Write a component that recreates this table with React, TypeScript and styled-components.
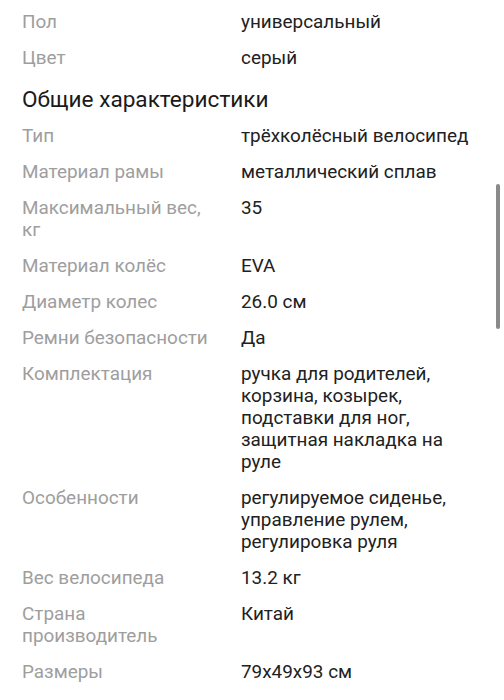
import React from 'react';
import styled, { createGlobalStyle } from 'styled-components';

const GlobalStyle = createGlobalStyle`
  body {
    margin: 0;
    background: #ffffff;
    font-family: Roboto, "Noto Sans", sans-serif;
  }
`;

const Page = styled.div`
  position: relative;
  width: 504px;
  height: 700px;
  overflow: hidden;
  background: #ffffff;
  padding-top: 4px;
  box-sizing: border-box;
`;

const SpecList = styled.dl`
  margin: 0;
  padding: 0 26px 0 22px;
  display: grid;
  grid-template-columns: 193px 1fr;
  column-gap: 26px;
`;

const Label = styled.dt`
  padding: 7px 0;
  font-size: 18.9px;
  line-height: 22px;
  color: #9e9e9e;
`;

const Value = styled.dd`
  margin: 0;
  padding: 7px 0;
  font-size: 18.9px;
  line-height: 22px;
  color: #212121;
`;

const SectionTitle = styled.h3`
  margin: 0;
  padding: 10px 22px 4px;
  font-size: 22.6px;
  font-weight: 400;
  line-height: 28px;
  color: #1a1a1a;
`;

const Scrollbar = styled.div`
  position: absolute;
  top: 184px;
  right: 4px;
  width: 4px;
  height: 145px;
  border-radius: 2px;
  background: #8a8a8a;
`;

type Spec = { label: string; value: string };

const top: Spec[] = [
  { label: 'Пол', value: 'универсальный' },
  { label: 'Цвет', value: 'серый' },
];

const general: Spec[] = [
  { label: 'Тип', value: 'трёхколёсный велосипед' },
  { label: 'Материал рамы', value: 'металлический сплав' },
  { label: 'Максимальный вес, кг', value: '35' },
  { label: 'Материал колёс', value: 'EVA' },
  { label: 'Диаметр колес', value: '26.0 см' },
  { label: 'Ремни безопасности', value: 'Да' },
  {
    label: 'Комплектация',
    value: 'ручка для родителей, корзина, козырек, подставки для ног, защитная накладка на руле',
  },
  {
    label: 'Особенности',
    value: 'регулируемое сиденье, управление рулем, регулировка руля',
  },
  { label: 'Вес велосипеда', value: '13.2 кг' },
  { label: 'Страна производитель', value: 'Китай' },
  { label: 'Размеры', value: '79x49x93 см' },
];

const Specs: React.FC<{ items: Spec[] }> = ({ items }) => (
  <SpecList>
    {items.map(item => (
      <React.Fragment key={item.label}>
        <Label>{item.label}</Label>
        <Value>{item.value}</Value>
      </React.Fragment>
    ))}
  </SpecList>
);

const App: React.FC = () => {
  return (
    <Page>
      <GlobalStyle />
      <Specs items={top} />
      <SectionTitle>Общие характеристики</SectionTitle>
      <Specs items={general} />
      <Scrollbar />
    </Page>
  );
};

export default App;
